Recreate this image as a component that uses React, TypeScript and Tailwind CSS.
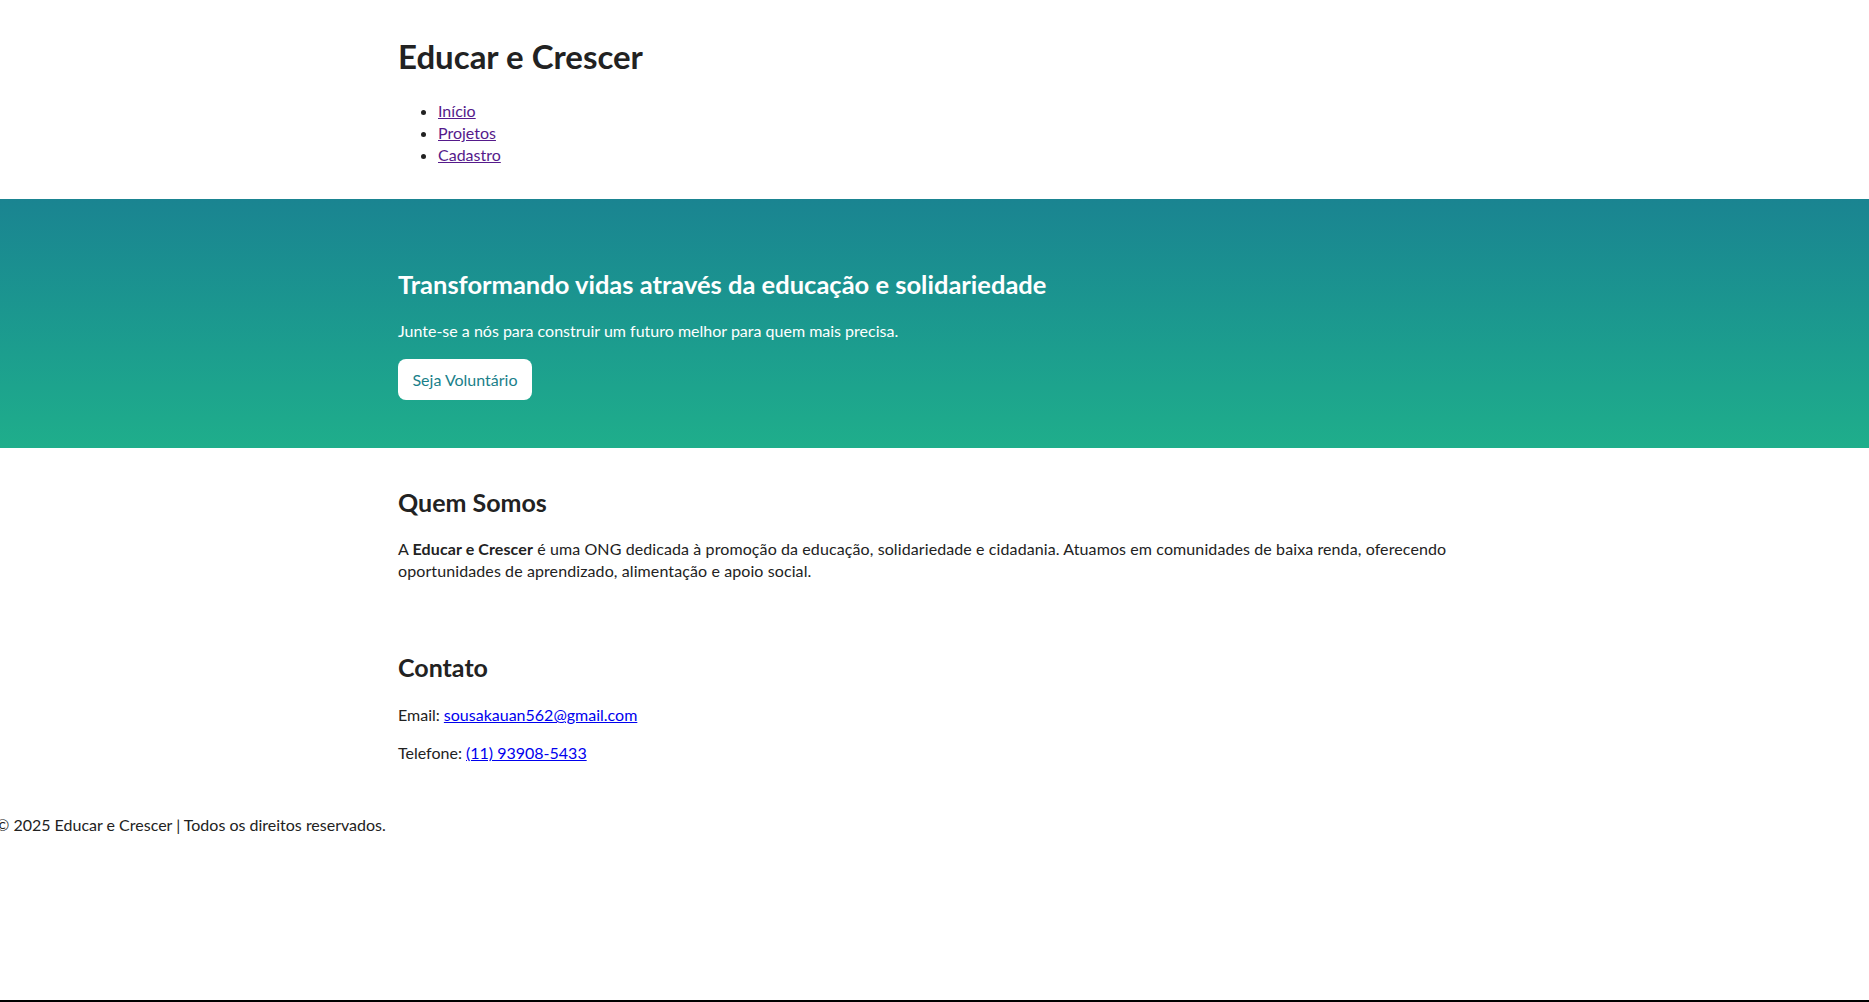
const font = { fontFamily: 'Lato, "Noto Sans", sans-serif' };

export default function App() {
    return (
        <div className="flex flex-col min-h-[1002px] bg-white text-[#222]" style={font}>
            <header className="w-[1073px] mx-auto pt-[35px]">
                <h1 className="text-[33px] leading-[42px] font-bold text-[#222]">Educar e Crescer</h1>
                <nav className="mt-[23px]">
                    <ul className="list-disc pl-[40px] text-[16px] leading-[22px]">
                        <li>
                            <a href="#inicio" className="underline text-[#551a8b]">Início</a>
                        </li>
                        <li>
                            <a href="#projetos" className="underline text-[#551a8b]">Projetos</a>
                        </li>
                        <li>
                            <a href="#cadastro" className="underline text-[#551a8b]">Cadastro</a>
                        </li>
                    </ul>
                </nav>
            </header>

            <section className="mt-[33px] h-[249px] bg-gradient-to-b from-[#1a8491] to-[#1fae8b] text-white">
                <div className="w-[1073px] mx-auto pt-[69px]">
                    <h2 className="text-[25.5px] leading-[32px] font-bold">
                        Transformando vidas através da educação e solidariedade
                    </h2>
                    <p className="mt-[20px] text-[16px] leading-[22px]">
                        Junte-se a nós para construir um futuro melhor para quem mais precisa.
                    </p>
                    <a
                        href="#cadastro"
                        className="mt-[17px] inline-flex items-center justify-center w-[134px] h-[41px] rounded-[8px] bg-white text-[16px] text-[#1a7f8a]"
                    >
                        Seja Voluntário
                    </a>
                </div>
            </section>

            <main className="w-[1073px] mx-auto">
                <section className="pt-[38px]">
                    <h2 className="text-[25px] leading-[32px] font-bold">Quem Somos</h2>
                    <p className="mt-[20px] text-[16px] leading-[22px] tracking-[0.1px]">
                        A <strong>Educar e Crescer</strong> é uma ONG dedicada à promoção da educação, solidariedade e
                        cidadania. Atuamos em comunidades de baixa renda, oferecendo
                        <br />
                        oportunidades de aprendizado, alimentação e apoio social.
                    </p>
                </section>

                <section className="pt-[69px]">
                    <h2 className="text-[25px] leading-[32px] font-bold">Contato</h2>
                    <p className="mt-[21px] text-[16px] leading-[22px]">
                        Email:{" "}
                        <a href="mailto:sousakauan562@gmail.com" className="underline text-[#0000ee]">
                            sousakauan562@gmail.com
                        </a>
                    </p>
                    <p className="mt-[16px] text-[16px] leading-[22px]">
                        Telefone:{" "}
                        <a href="tel:11939085433" className="underline text-[#0000ee]">
                            (11) 93908-5433
                        </a>
                    </p>
                </section>
            </main>

            <footer className="mt-[50px] -ml-[4px] text-[16px] leading-[22px]">
                © 2025 Educar e Crescer | Todos os direitos reservados.
            </footer>

            <div className="mt-auto h-[2px] bg-black" />
        </div>
    );
}
